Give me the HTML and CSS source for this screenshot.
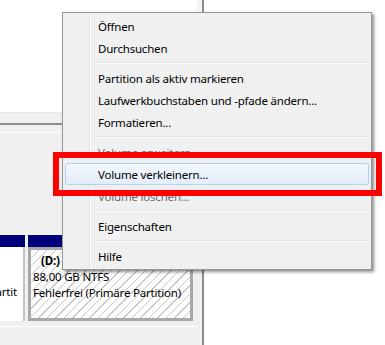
FILE: index.html
```html
<!DOCTYPE html>
<html lang="de">
<head>
  <meta charset="utf-8">
  <link rel="stylesheet" href="styles.css">
</head>
<body>
  <div class="screen">
    <div class="window">
      <div class="list"></div>
      <div class="scroll"></div>
      <div class="splitter"></div>
      <div class="graph">
        <div class="rule"></div>
        <div class="disk">
          <div class="part part-c">
            <div class="cap"></div>
            <div class="body">
              <div class="line clip"><span>Fehlerfrei (Primäre Partit</span></div>
            </div>
          </div>
          <div class="part part-d">
            <div class="cap"></div>
            <div class="body">
              <div class="line name">(D:)</div>
              <div class="line">88,00 GB NTFS</div>
              <div class="line">Fehlerfrei (Primäre Partition)</div>
            </div>
          </div>
        </div>
        <div class="rule rule-bottom"></div>
      </div>
    </div>

    <ul class="menu">
      <li class="item">Öffnen</li>
      <li class="item">Durchsuchen</li>
      <li class="sep"></li>
      <li class="item">Partition als aktiv markieren</li>
      <li class="item">Laufwerkbuchstaben und -pfade ändern...</li>
      <li class="item">Formatieren...</li>
      <li class="sep"></li>
      <li class="item disabled">Volume erweitern...</li>
      <li class="item hover">Volume verkleinern...</li>
      <li class="item disabled">Volume löschen...</li>
      <li class="sep"></li>
      <li class="item">Eigenschaften</li>
      <li class="sep"></li>
      <li class="item">Hilfe</li>
    </ul>

    <div class="mark"></div>
  </div>
</body>
</html>
```

FILE: styles.css
```css
body {
  margin: 0;
  background: #fff;
  font-family: "Segoe UI", "Noto Sans", sans-serif;
  font-size: 11.5px;
  letter-spacing: -0.2px;
  color: #000;
}

.screen {
  position: relative;
  width: 385px;
  height: 345px;
  overflow: hidden;
  display: flex;
}

/* disk management window behind the menu */
.window {
  width: 202px;
  height: 100%;
  background: #f0f0f0;
  border-right: 2px solid #8a8a8a;
  display: flex;
  flex-direction: column;
}

.list {
  height: 112px;
  background: #fff;
  border-right: 5px solid #f4f4f4;
}

.scroll {
  height: 11px;
  background: #f0f0f0;
  border-top: 1px solid #e6e6e6;
  box-sizing: border-box;
}

.splitter {
  height: 2px;
  background: #8c8c8c;
}

.graph {
  flex: 1;
}

.rule {
  height: 1px;
  margin-top: 7px;
  background: #fff;
}

.rule-bottom {
  margin-top: 5px;
  margin-right: 5px;
}

.disk {
  display: flex;
  gap: 3px;
  margin-top: 102px;
}

.cap {
  height: 12px;
  background: #00007b;
}

.part-c {
  width: 25px;
}

.part-c .body {
  height: 74px;
  background: #fff;
  border-right: 2px solid #c4c4c4;
  padding-top: 37px;
  box-sizing: border-box;
}

.line {
  height: 16px;
  line-height: 16px;
  white-space: nowrap;
}

.clip {
  display: flex;
  justify-content: flex-end;
  overflow: hidden;
  padding-right: 6px;
}

.part-d {
  width: 165px;
}

.part-d .body {
  height: 74px;
  box-sizing: border-box;
  border: 3px solid #a8a8a8;
  padding: 3px 0 0 2px;
  overflow: hidden;
  background: repeating-linear-gradient(135deg, #fff 0 5px, #c8c8c8 5px 6px);
}

.name {
  font-weight: bold;
  padding-left: 8px;
}

/* context menu */
.menu {
  position: absolute;
  left: 62px;
  top: 12px;
  width: 310px;
  margin: 0;
  padding: 2px;
  list-style: none;
  box-sizing: border-box;
  background: #f0f0f0;
  border: 1px solid #979797;
  box-shadow: 2px 2px 3px rgba(0, 0, 0, 0.45);
  background-image: linear-gradient(to right, transparent 26px, #e2e3e3 26px 27px, #fff 27px 28px, transparent 28px);
}

.item {
  height: 22px;
  line-height: 21px;
  padding-left: 32px;
  box-sizing: border-box;
  border: 1px solid transparent;
  border-radius: 3px;
}

.item.disabled {
  color: #6d6d6d;
}

.item.hover {
  border-color: #aecff7;
  background: linear-gradient(#f3f7fd, #e4edf9);
}

.sep {
  height: 8px;
  margin-left: 28px;
  background: linear-gradient(transparent 3px, #e0e0e0 3px 4px, #fff 4px 5px, transparent 5px);
}

/* red annotation frame */
.mark {
  position: absolute;
  left: 53px;
  top: 152px;
  width: 329px;
  height: 44px;
  box-sizing: border-box;
  border: 6px solid #f00;
}
```
